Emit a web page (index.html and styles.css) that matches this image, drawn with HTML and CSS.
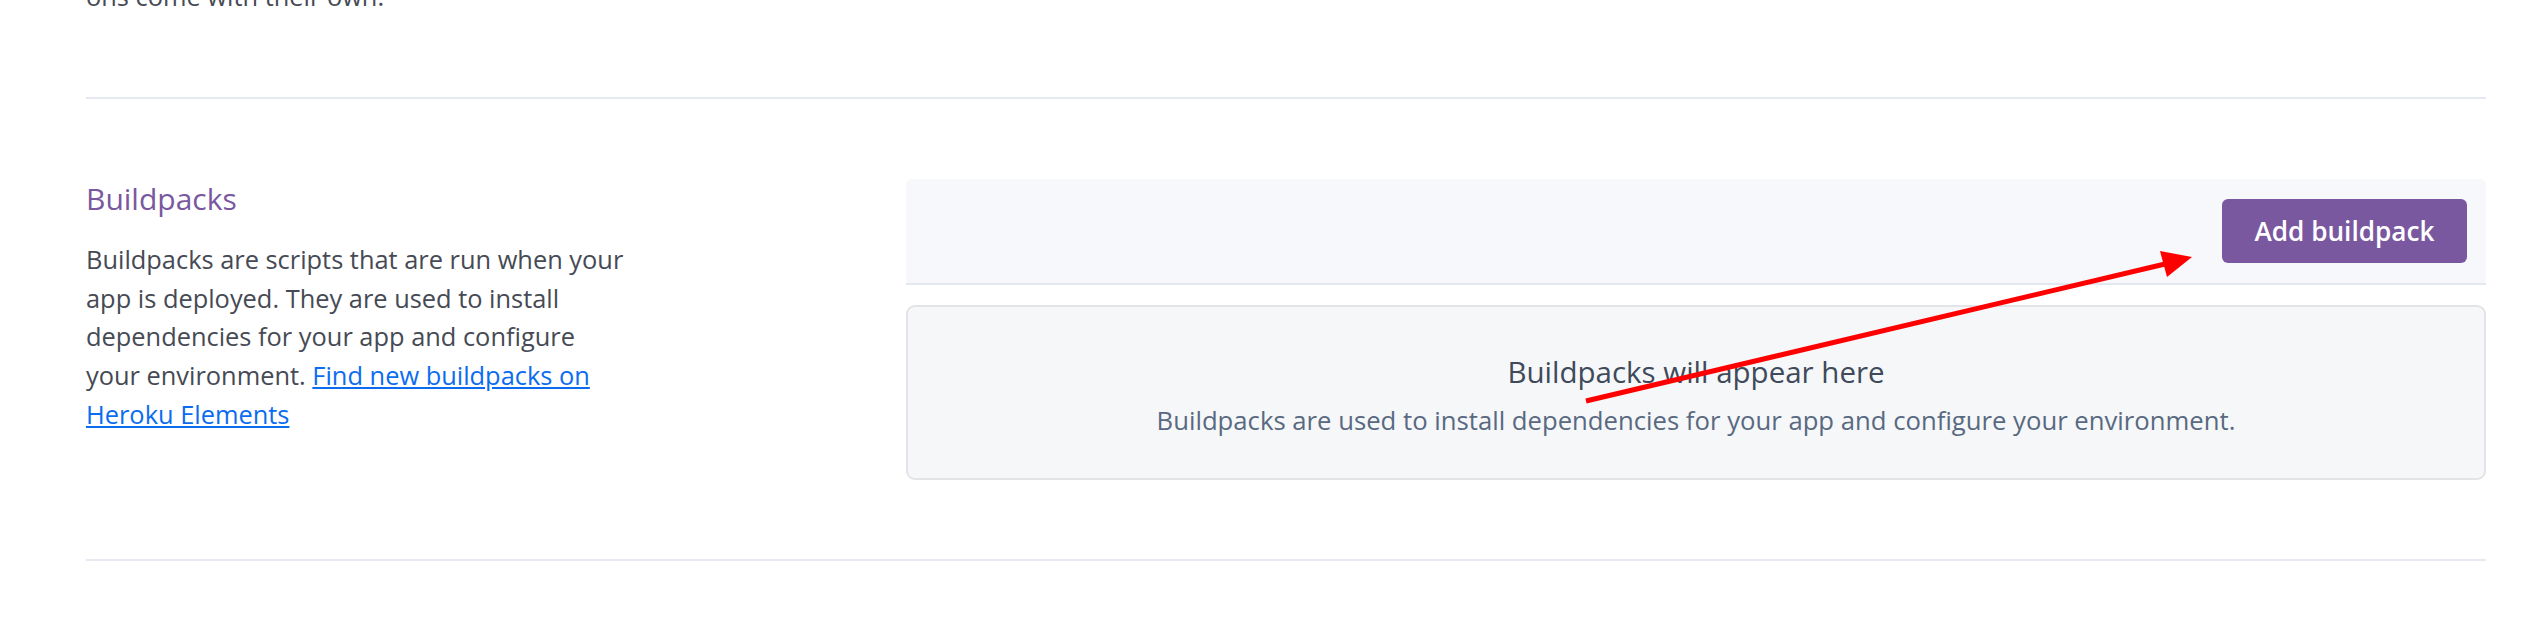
FILE: index.html
```html
<!DOCTYPE html>
<html>
<head>
<meta charset="utf-8">
<link rel="stylesheet" href="styles.css">
</head>
<body>
<div class="page">
  <section class="prev-section">
    <p class="body-text">ons come with their own.</p>
  </section>
  <section class="settings-section">
    <div class="side">
      <h2 class="side-title">Buildpacks</h2>
      <p class="body-text side-desc">Buildpacks are scripts that are run when your app is deployed. They are used to install dependencies for your app and configure your environment. <a class="link" href="#">Find new buildpacks on Heroku Elements</a></p>
    </div>
    <div class="main">
      <div class="panel-head">
        <button class="btn-primary">Add buildpack</button>
      </div>
      <div class="empty-box">
        <div class="empty-title">Buildpacks will appear here</div>
        <div class="empty-sub">Buildpacks are used to install dependencies for your app and configure your environment.</div>
      </div>
    </div>
  </section>
</div>
<svg class="annotation" width="2537" height="641" viewBox="0 0 2537 641">
  <line x1="1586" y1="401" x2="2165" y2="264" stroke="#ff0000" stroke-width="5"/>
  <polygon points="2192,257 2160,251 2167,277" fill="#ff0000"/>
</svg>
</body>
</html>
```
FILE: styles.css
```css
html, body {
  margin: 0;
  padding: 0;
  background: #ffffff;
}
body {
  font-family: "Open Sans", "Noto Sans", sans-serif;
  color: #464a54;
  position: relative;
  overflow: hidden;
  height: 641px;
}
.page {
  margin: 0 51px 0 86px;
}
.body-text {
  font-size: 25.4px;
  line-height: 38.8px;
  margin: 0;
}
.prev-section {
  margin-top: -23px;
  padding-bottom: 81px;
  border-bottom: 2px solid #e6e9f1;
}
.settings-section {
  display: flex;
  padding: 80px 0 79px;
  border-bottom: 2px solid #e6e9f1;
}
.side {
  width: 820px;
  flex-shrink: 0;
}
.side-title {
  font-size: 30px;
  font-weight: 400;
  color: #79589f;
  margin: 0 0 21px;
  line-height: 40px;
}
.side-desc {
  max-width: 544px;
}
.link {
  color: #0b6cf0;
  text-decoration: underline;
}
.main {
  flex: 1;
  display: flex;
  flex-direction: column;
  gap: 20px;
}
.panel-head {
  background: #f7f8fb;
  border-radius: 6px 6px 0 0;
  border-bottom: 2px solid #e3e7f0;
  padding: 20px 19px;
  display: flex;
  justify-content: flex-end;
}
.btn-primary {
  height: 64px;
  width: 245px;
  background: #79589f;
  color: #ffffff;
  border: none;
  border-radius: 6px;
  font-family: "Open Sans", sans-serif;
  font-size: 26.2px;
  font-weight: 600;
  padding: 0;
}
.empty-box {
  box-sizing: border-box;
  height: 175px;
  background: #f6f7f9;
  border: 2px solid #e2e4e8;
  border-radius: 9px;
  text-align: center;
  padding-top: 45px;
}
.empty-title {
  font-size: 29.5px;
  font-weight: 400;
  color: #3f4a5a;
  line-height: 40px;
}
.empty-sub {
  font-size: 25.7px;
  color: #596981;
  line-height: 36px;
  margin-top: 11px;
}
.annotation {
  position: absolute;
  left: 0;
  top: 0;
  pointer-events: none;
}
```
